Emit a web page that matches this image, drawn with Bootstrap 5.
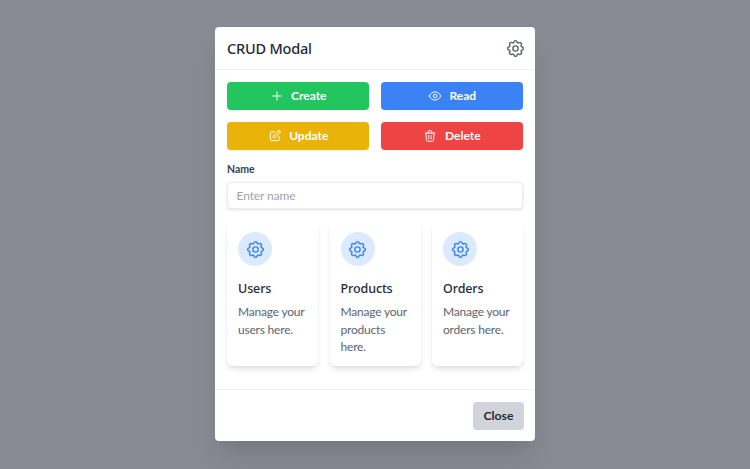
<!DOCTYPE html>
<html lang="en">
<head>
<meta charset="utf-8">
<title>CRUD Modal</title>
<link href="https://cdn.jsdelivr.net/npm/bootstrap@5.3.0/dist/css/bootstrap.min.css" rel="stylesheet">
<style>
html,body{height:100%;}
body{background:#878a93;font-family:"Lato","Noto Sans",sans-serif;color:#111827;overflow:hidden;}
.crud-box{width:320px;height:414px;background:#fff;border:0;border-radius:4px;box-shadow:0 20px 25px -5px rgba(0,0,0,.1),0 10px 10px -5px rgba(0,0,0,.04);margin-top:-1px;}
.crud-box .modal-header{height:43px;padding:0 9px 0 12px;border-bottom:1px solid #f0f1f3;flex-shrink:0;}
.crud-title{font-family:"Noto Sans",sans-serif;font-size:14.5px;font-weight:500;line-height:1;color:#1f2937;letter-spacing:-.2px;}
.crud-box .modal-body{padding:12px 12px 0 12px;flex:1 1 auto;}
.act-grid{display:grid;grid-template-columns:142px 142px;column-gap:12px;row-gap:12px;}
.act-btn{height:28px;border:0;border-radius:4px;color:#fff;font-size:12px;font-weight:700;padding:0;display:flex;align-items:center;justify-content:center;gap:7.5px;box-shadow:0 1px 2px rgba(0,0,0,.05);}
.act-btn svg{width:14px;height:14px;stroke-width:1.7;}
.act-create{background:#22c55e;}
.act-read{background:#3b82f6;}
.act-update{background:#eab308;}
.act-delete{background:#ef4444;}
.act-btn:hover{color:#fff;}
.name-label{font-size:10.5px;font-weight:700;color:#374151;line-height:14px;margin:12px 0 6px;}
.name-input{height:27px;width:296px;border:1px solid #eceef1;border-radius:4px;font-size:12px;padding:0 8.5px;box-shadow:0 1px 3px rgba(0,0,0,.12);letter-spacing:-.1px;}
.name-input::placeholder{color:#9ca3af;}
.tile-row{display:grid;grid-template-columns:repeat(3,1fr);column-gap:11.5px;margin-top:13px;}
.tile{height:144px;padding:10px 8px 10px 11px;border-radius:6px;background:#fff;box-shadow:0 4px 6px -1px rgba(0,0,0,.1),0 2px 4px -1px rgba(0,0,0,.06);}
.tile-icon{width:34px;height:34px;border-radius:50%;background:#dbeafe;display:flex;align-items:center;justify-content:center;color:#3b82f6;}
.tile-icon svg{width:21px;height:21px;stroke-width:1.6;}
.tile-name{font-family:"Noto Sans",sans-serif;font-size:12.5px;font-weight:500;line-height:18px;margin:14px 0 5px;color:#1f2937;letter-spacing:-.1px;}
.tile-text{font-size:12px;line-height:17.5px;color:#5b6470;margin:0;letter-spacing:-.2px;}
.crud-box .modal-footer{height:52px;padding:0 11px 11px 0;border-top:1px solid #f0f1f3;flex-shrink:0;align-items:flex-end;}
.close-btn{width:51px;height:28px;background:#d1d5db;border:0;border-radius:4px;color:#1f2937;font-size:12.2px;font-weight:700;padding:0;margin:0;}
.close-btn:hover{background:#d1d5db;}
.gear-top{width:21px;height:21px;color:#5b6370;stroke-width:1.6;}
</style>
</head>
<body class="d-flex align-items-center justify-content-center">
<div class="modal-content crud-box">
  <div class="modal-header d-flex justify-content-between align-items-center">
    <h5 class="crud-title m-0">CRUD Modal</h5>
    <svg class="gear-top" viewBox="0 0 24 24" fill="none" stroke="currentColor" stroke-linecap="round" stroke-linejoin="round"><path d="M10.325 4.317c.426-1.756 2.924-1.756 3.35 0a1.724 1.724 0 002.573 1.066c1.543-.94 3.31.826 2.37 2.37a1.724 1.724 0 001.065 2.572c1.756.426 1.756 2.924 0 3.35a1.724 1.724 0 00-1.066 2.573c.94 1.543-.826 3.31-2.37 2.37a1.724 1.724 0 00-2.572 1.065c-.426 1.756-2.924 1.756-3.35 0a1.724 1.724 0 00-2.573-1.066c-1.543.94-3.31-.826-2.37-2.37a1.724 1.724 0 00-1.065-2.572c-1.756-.426-1.756-2.924 0-3.35a1.724 1.724 0 001.066-2.573c-.94-1.543.826-3.31 2.37-2.37.996.608 2.296.07 2.572-1.065z"/><path d="M15 12a3 3 0 11-6 0 3 3 0 016 0z"/></svg>
  </div>
  <div class="modal-body">
    <div class="act-grid">
      <button class="btn act-btn act-create" type="button"><svg viewBox="0 0 24 24" fill="none" stroke="currentColor" stroke-linecap="round" stroke-linejoin="round"><path d="M12 5v14m7-7H5"/></svg>Create</button>
      <button class="btn act-btn act-read" type="button"><svg viewBox="0 0 24 24" fill="none" stroke="currentColor" stroke-linecap="round" stroke-linejoin="round"><path d="M15 12a3 3 0 11-6 0 3 3 0 016 0z"/><path d="M2.458 12C3.732 7.943 7.523 5 12 5c4.478 0 8.268 2.943 9.542 7-1.274 4.057-5.064 7-9.542 7-4.477 0-8.268-2.943-9.542-7z"/></svg>Read</button>
      <button class="btn act-btn act-update" type="button"><svg viewBox="0 0 24 24" fill="none" stroke="currentColor" stroke-linecap="round" stroke-linejoin="round"><path d="M11 5H6a2 2 0 00-2 2v11a2 2 0 002 2h11a2 2 0 002-2v-5m-1.414-9.414a2 2 0 112.828 2.828L11.828 15H9v-2.828l8.586-8.586z"/></svg>Update</button>
      <button class="btn act-btn act-delete" type="button"><svg viewBox="0 0 24 24" fill="none" stroke="currentColor" stroke-linecap="round" stroke-linejoin="round"><path d="M19 7l-.867 12.142A2 2 0 0116.138 21H7.862a2 2 0 01-1.995-1.858L5 7m5 4v6m4-6v6m1-10V4a1 1 0 00-1-1h-4a1 1 0 00-1 1v3M4 7h16"/></svg>Delete</button>
    </div>
    <label class="name-label d-block" for="nm">Name</label>
    <input id="nm" class="form-control name-input" type="text" placeholder="Enter name">
    <div class="tile-row">
      <div class="tile"><div class="tile-icon"><svg viewBox="0 0 24 24" fill="none" stroke="currentColor" stroke-linecap="round" stroke-linejoin="round"><path d="M10.325 4.317c.426-1.756 2.924-1.756 3.35 0a1.724 1.724 0 002.573 1.066c1.543-.94 3.31.826 2.37 2.37a1.724 1.724 0 001.065 2.572c1.756.426 1.756 2.924 0 3.35a1.724 1.724 0 00-1.066 2.573c.94 1.543-.826 3.31-2.37 2.37a1.724 1.724 0 00-2.572 1.065c-.426 1.756-2.924 1.756-3.35 0a1.724 1.724 0 00-2.573-1.066c-1.543.94-3.31-.826-2.37-2.37a1.724 1.724 0 00-1.065-2.572c-1.756-.426-1.756-2.924 0-3.35a1.724 1.724 0 001.066-2.573c-.94-1.543.826-3.31 2.37-2.37.996.608 2.296.07 2.572-1.065z"/><path d="M15 12a3 3 0 11-6 0 3 3 0 016 0z"/></svg></div><h6 class="tile-name">Users</h6><p class="tile-text">Manage your users here.</p></div>
      <div class="tile"><div class="tile-icon"><svg viewBox="0 0 24 24" fill="none" stroke="currentColor" stroke-linecap="round" stroke-linejoin="round"><path d="M10.325 4.317c.426-1.756 2.924-1.756 3.35 0a1.724 1.724 0 002.573 1.066c1.543-.94 3.31.826 2.37 2.37a1.724 1.724 0 001.065 2.572c1.756.426 1.756 2.924 0 3.35a1.724 1.724 0 00-1.066 2.573c.94 1.543-.826 3.31-2.37 2.37a1.724 1.724 0 00-2.572 1.065c-.426 1.756-2.924 1.756-3.35 0a1.724 1.724 0 00-2.573-1.066c-1.543.94-3.31-.826-2.37-2.37a1.724 1.724 0 00-1.065-2.572c-1.756-.426-1.756-2.924 0-3.35a1.724 1.724 0 001.066-2.573c-.94-1.543.826-3.31 2.37-2.37.996.608 2.296.07 2.572-1.065z"/><path d="M15 12a3 3 0 11-6 0 3 3 0 016 0z"/></svg></div><h6 class="tile-name">Products</h6><p class="tile-text">Manage your products here.</p></div>
      <div class="tile"><div class="tile-icon"><svg viewBox="0 0 24 24" fill="none" stroke="currentColor" stroke-linecap="round" stroke-linejoin="round"><path d="M10.325 4.317c.426-1.756 2.924-1.756 3.35 0a1.724 1.724 0 002.573 1.066c1.543-.94 3.31.826 2.37 2.37a1.724 1.724 0 001.065 2.572c1.756.426 1.756 2.924 0 3.35a1.724 1.724 0 00-1.066 2.573c.94 1.543-.826 3.31-2.37 2.37a1.724 1.724 0 00-2.572 1.065c-.426 1.756-2.924 1.756-3.35 0a1.724 1.724 0 00-2.573-1.066c-1.543.94-3.31-.826-2.37-2.37a1.724 1.724 0 00-1.065-2.572c-1.756-.426-1.756-2.924 0-3.35a1.724 1.724 0 001.066-2.573c-.94-1.543.826-3.31 2.37-2.37.996.608 2.296.07 2.572-1.065z"/><path d="M15 12a3 3 0 11-6 0 3 3 0 016 0z"/></svg></div><h6 class="tile-name">Orders</h6><p class="tile-text">Manage your orders here.</p></div>
    </div>
  </div>
  <div class="modal-footer">
    <button class="btn close-btn" type="button">Close</button>
  </div>
</div>
<script src="https://cdn.jsdelivr.net/npm/bootstrap@5.3.0/dist/js/bootstrap.bundle.min.js"></script>
</body>
</html>
